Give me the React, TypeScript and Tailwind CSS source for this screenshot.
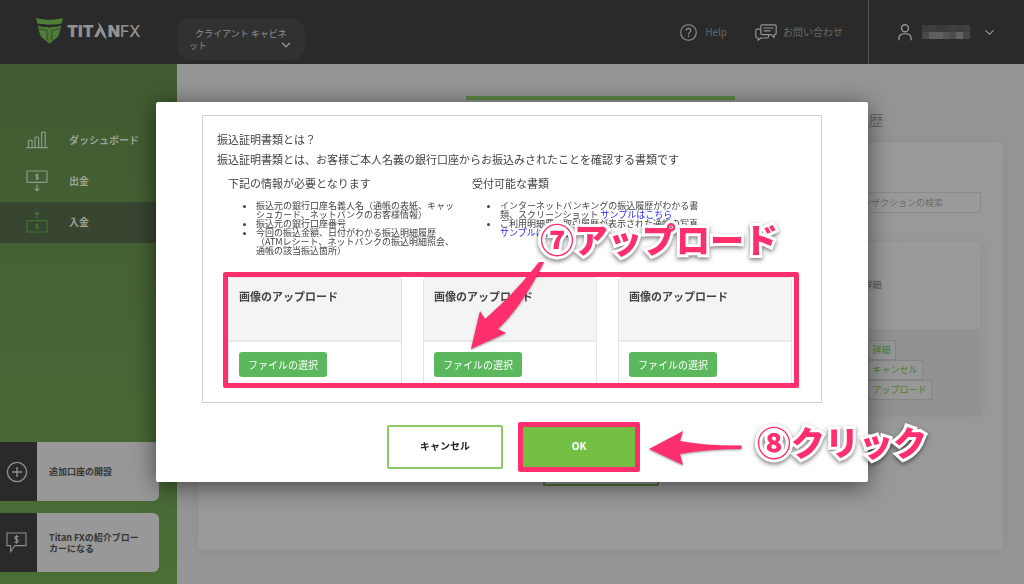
import type { ReactNode } from 'react'
import { ChevronDown } from 'lucide-react'

const UPLOAD_SLOTS = ['slot-1', 'slot-2', 'slot-3']

// Grey levels of the masked account name
const MASK_ROWS = [
  ['#3c3c3c', '#3e3e3e', '#393939', '#3a3a3a', '#3f3f3f', '#3d3d3d', '#414141'],
  ['#484848', '#5e5e5e', '#606060', '#545454', '#4d4d4d', '#636363', '#474747'],
]

function ShieldLogo() {
  return (
    <svg width="27" height="26" viewBox="0 0 27 26" fill="#4e7f35" aria-hidden="true">
      <path d="M0 0C8 2.4 19 2.4 27 0L25.6 5.6C18 7.2 9 7.2 1.4 5.6Z" />
      <path d="M2 7.6C5 8.6 8.6 9.2 12.8 9.3L12.8 25L6 19.4Q4.2 17.800 3.600 15.200Z" />
      <path d="M25 7.6C22 8.6 18.4 9.2 14.2 9.3L14.2 25L21 19.4Q22.800 17.800 23.400 15.200Z" />
      <path d="M3.600 10.800Q7 12 10.800 12.200L11.200 22M23.400 10.800Q20 12 16.200 12.200L15.800 22" fill="none" stroke="#2a2a2a" strokeWidth="0.7" />
      <path d="M12.500 10h2v15l-1 .8-1-.8z" />
    </svg>
  )
}

function ChartIcon() {
  return (
    <svg width="22" height="18" viewBox="0 0 22 18" fill="none" stroke="currentColor" strokeWidth="1.2" aria-hidden="true">
      <path d="M0 16.6h22M2.5 16.5V10.2q0-.8.8-.8h2q.8 0 .8.8v6.3M9 16.5V6.8q0-.8.8-.8h2q.8 0 .8.8v9.7M15.6 16.5V2q0-.8.8-.8h2q.8 0 .8.8v14.5" />
    </svg>
  )
}

function WithdrawIcon() {
  return (
    <svg width="22" height="22" viewBox="0 0 22 22" fill="none" stroke="currentColor" strokeWidth="1.2" aria-hidden="true">
      <rect x="1" y="1" width="20" height="11.4" rx="0.6" />
      <path d="M12.3 5.3Q11 4.2 10 5.1Q9.6 6.3 11 6.7Q12.8 7.2 12 8.5Q10.8 9.4 9.7 8.3M11 3.6v6.4M11 14.4v6.4M8.7 18.4l2.3 2.4 2.3-2.4" />
    </svg>
  )
}

function DepositIcon() {
  return (
    <svg width="22" height="22" viewBox="0 0 22 22" fill="none" stroke="currentColor" strokeWidth="1.2" aria-hidden="true">
      <rect x="1" y="9.6" width="20" height="11.4" rx="0.6" />
      <path d="M12.3 13.9Q11 12.8 10 13.7Q9.6 14.9 11 15.3Q12.8 15.8 12 17.1Q10.8 18 9.7 16.9M11 12.2v6.4M11 7.6V1.2M8.7 3.6L11 1.2l2.3 2.4" />
    </svg>
  )
}

function HelpIcon() {
  return (
    <svg width="17" height="17" viewBox="0 0 17 17" fill="none" stroke="currentColor" strokeWidth="1.1" aria-hidden="true">
      <circle cx="8.5" cy="8.5" r="7.8" />
      <path d="M6.2 6.7Q6.2 4.4 8.5 4.4T10.8 6.5Q10.8 7.6 9.6 8.4T8.5 10.5M8.5 11.6v1.5" />
    </svg>
  )
}

function ChatIcon() {
  return (
    <svg width="22" height="17" viewBox="0 0 22 17" fill="none" stroke="currentColor" strokeWidth="1.2" strokeLinejoin="round" aria-hidden="true">
      <path d="M7.2.8h12.600q1.400 0 1.400 1.400v7q0 1.400-1.400 1.400h-.6v3l-3-3H7.2q-1.400 0-1.400-1.400v-7Q5.800.8 7.2.8zM8.500 4h10M8.500 6.900h7" />
      <path d="M5.600 5.200H2.200Q.8 5.200.8 6.600v6Q.8 14 2.200 14h1v2.400l2.600-2.400h6.400q1.400 0 1.400-1.400v-1.800" />
    </svg>
  )
}

function UserIcon() {
  return (
    <svg width="14" height="17" viewBox="0 0 14 17" fill="none" stroke="currentColor" strokeWidth="1.4" aria-hidden="true">
      <circle cx="7" cy="4.300" r="3.500" />
      <path d="M.8 16.200v-1.200Q.8 9.600 7 9.600t6.200 5.400v1.200" />
    </svg>
  )
}

function PlusCircleIcon() {
  return (
    <svg width="22" height="22" viewBox="0 0 22 22" fill="none" stroke="currentColor" strokeWidth="1.400" aria-hidden="true">
      <circle cx="11" cy="11" r="9.600" />
      <path d="M11 6v10M6 11h10" />
    </svg>
  )
}

function BrokerIcon() {
  return (
    <svg width="21" height="21" viewBox="0 0 21 21" fill="none" stroke="currentColor" strokeWidth="1.100" aria-hidden="true">
      <path d="M1 1h19v12.600H8.800L4.600 19.600V13.600H1z" />
      <path d="M12.600 5Q10.600 3.700 9 4.900Q8.400 6.700 10.500 7.200Q13.100 7.900 12 9.700Q10.400 10.900 8.500 9.500M10.500 2.900v8.800" />
    </svg>
  )
}

function Header() {
  return (
    <header className="flex h-16 items-center bg-[#2a2a2a] text-[#929292]">
      <a href="#" className="flex w-[177px] items-center gap-1 pb-0.5 pl-9" aria-label="TITAN FX">
        <ShieldLogo />
        <span className="flex items-center text-[16px] leading-4 font-black font-['Inter',sans-serif]">
          <span>TIT</span>
          <svg width="14" height="18" viewBox="0 0 14 18" fill="currentColor" aria-hidden="true">
            <path d="M0 15L5 5L7 8.500L3.600 15zM3.600 0Q9 4 13 17.600Q7.500 14 6.500 8Z" />
          </svg>
          <span>N</span>
          <span className="font-medium">FX</span>
        </span>
      </a>
      <button className="mb-1 flex h-[42px] w-32 items-end justify-between self-end rounded-[14px] bg-[#313131] px-3 pb-2 text-left text-[9px] leading-[12px]">
        <span className="w-[106px] indent-[6px]">クライアント キャビネット</span>
        <ChevronDown className="-ml-3 shrink-0" size={14} strokeWidth={2.5} />
      </button>
      <nav className="ml-auto flex items-center gap-7 pr-[25px] text-[10px] leading-4 text-[#686868]">
        <a href="#" className="flex items-center gap-2">
          <span className="text-[#929292]"><HelpIcon /></span>
          Help
        </a>
        <a href="#" className="flex items-center gap-1.5">
          <span className="text-[#929292]"><ChatIcon /></span>
          お問い合わせ
        </a>
      </nav>
      <button className="flex h-full items-center border-l border-[#565656] pr-[27px] pl-[29px]" aria-label="アカウント">
        <UserIcon />
        <span className="ml-2.5 flex w-12 flex-col">
          {MASK_ROWS.map((row, i) => (
            <span key={i} className="flex h-[7px]">
              {row.map((color, j) => (
                <span key={j} className="flex-1" style={{ backgroundColor: color }} />
              ))}
            </span>
          ))}
        </span>
        <ChevronDown className="ml-3" size={15} strokeWidth={2} />
      </button>
    </header>
  )
}

function NavItem({ icon, label, active }: { icon: ReactNode; label: string; active?: boolean }) {
  return (
    <a href="#" className={`flex h-[41px] items-center pb-0.5 pl-[26px] ${active ? 'bg-[#384531]' : ''}`}>
      <span className={`w-[43px] ${active ? 'text-[#41742e]' : 'text-[#8f998a]'}`}>{icon}</span>
      <span className="text-[10px] leading-4 font-bold text-[#9ca298]">{label}</span>
    </a>
  )
}

function PromoCard({ icon, label }: { icon: ReactNode; label: string }) {
  return (
    <a href="#" className="mr-[18px] flex h-[59px] overflow-hidden rounded-r-md bg-[#989898]">
      <span className="flex w-[37px] shrink-0 items-center justify-center bg-[#2a2a2a] pr-1 text-[#8d8d8d]">{icon}</span>
      <span className="flex items-center pr-4 pl-3 text-[9px] leading-[11px] font-bold text-[#353535]">{label}</span>
    </a>
  )
}

function Sidebar() {
  return (
    <aside className="flex w-[177px] shrink-0 flex-col bg-linear-to-b from-[#415b32] to-[#4a6e36] pt-14 pb-3">
      <nav>
        <NavItem icon={<ChartIcon />} label="ダッシュボード" />
        <NavItem icon={<WithdrawIcon />} label="出金" />
        <NavItem icon={<DepositIcon />} label="入金" active />
      </nav>
      <div className="mt-auto flex flex-col gap-3">
        <PromoCard icon={<PlusCircleIcon />} label="追加口座の開設" />
        <PromoCard icon={<BrokerIcon />} label="Titan FXの紹介ブローカーになる" />
      </div>
    </aside>
  )
}

function RowAction({ label }: { label: string }) {
  return (
    <button className="h-5 border border-[#858585] bg-[#979797] px-1 text-[9px] leading-4 text-[#4a8036]">{label}</button>
  )
}

function History() {
  return (
    <main className="flex-1 bg-[#959595] px-[21px] pt-8 pb-8">
      <div className="grid grid-cols-3 text-center text-[15px] leading-5 text-[#686868]">
        <a href="#" className="h-[46px] border-t-4 border-transparent pt-2.5">{' '}</a>
        <a href="#" className="h-[46px] border-t-4 border-[#5c8a46] pt-2.5">{' '}</a>
        <a href="#" className="h-[46px] border-t-4 border-transparent pt-2.5">履歴</a>
      </div>
      <section className="rounded-sm bg-[#999] px-[22px] pt-[50px] pb-16 shadow-[0_0_12px_rgba(0,0,0,0.06)]">
        <div className="flex justify-end">
          <input
            type="text"
            aria-label="トランザクションの検索"
            placeholder="トランザクションの検索"
            className="h-[21px] w-[146px] border border-[#8b8b8b] bg-[#9a9a9a] px-2 text-[9px] placeholder:text-[#6b6b6b]"
          />
        </div>
        <table className="mt-7 w-full border border-[#929292] text-left text-[9px] leading-4 shadow-[0_0_12px_rgba(0,0,0,0.05)]">
          <thead>
            <tr className="h-[87px] bg-[#9a9a9a] text-[#626262]">
              <td />
              <th className="w-[117px] font-medium">詳細</th>
            </tr>
          </thead>
          <tbody>
            <tr className="h-[87px] bg-[#929292]">
              <td />
              <td className="pb-1 pl-1">
                <div className="flex flex-col items-start">
                  <RowAction label="詳細" />
                  <RowAction label="キャンセル" />
                  <RowAction label="アップロード" />
                </div>
              </td>
            </tr>
          </tbody>
        </table>
        <div className="mt-[26px] flex justify-center">
          <button className="h-11 w-[116px] rounded-xs border-2 border-[#50733f]" aria-label="戻る" />
        </div>
      </section>
    </main>
  )
}

function UploadCard() {
  return (
    <div className="h-full rounded-t-sm border border-b-0 border-[#e4e4e4] bg-white">
      <div className="h-16 border-b-2 border-[#e9e9e9] bg-[#f4f4f4] px-2.5 pt-2">
        <h4 className="text-[11px] leading-5 font-bold text-[#444]">画像のアップロード</h4>
      </div>
      <div className="flex px-2.5 pt-2.5">
        <button className="h-[25px] w-[88px] rounded-[3px] bg-[#5cb85c] text-[10px] leading-4 text-white">ファイルの選択</button>
      </div>
    </div>
  )
}

function Annotation({ children }: { children: ReactNode }) {
  return (
    <span className="text-[34px] leading-10 font-black whitespace-nowrap text-[#ff2f6e] [-webkit-text-stroke:6px_white] [paint-order:stroke_fill] [stroke-linejoin:round] drop-shadow-[0_2px_2px_rgba(0,0,0,0.5)]">
      {children}
    </span>
  )
}

function UploadDialog() {
  return (
    <div
      role="dialog"
      aria-modal="true"
      className="relative w-full max-w-[712px] rounded-xs bg-white px-[46px] py-[13px] shadow-[0_4px_24px_rgba(0,0,0,0.55)]"
    >
      <div className="border border-[#cfcfcf] pt-[13px] pb-3.5 text-[#444]">
        <div className="px-3.5 text-[11px] leading-5">
          <h2>振込証明書類とは？</h2>
          <p>振込証明書類とは、お客様ご本人名義の銀行口座からお振込みされたことを確認する書類です</p>
        </div>
        <div className="mt-1 flex pl-[25px]">
          <div className="w-[244px]">
            <h3 className="text-[11px] leading-5">下記の情報が必要となります</h3>
            <ul className="mt-2 list-disc pr-4 pl-7 text-[9px] leading-[9px]">
              <li>振込元の銀行口座名義人名（通帳の表紙、キャッシュカード、ネットバンクのお客様情報）</li>
              <li>振込元の銀行口座番号</li>
              <li>今回の振込金額、日付がわかる振込明細履歴（ATMレシート、ネットバンクの振込明細照会、通帳の該当振込箇所）</li>
            </ul>
          </div>
          <div className="w-[244px]">
            <h3 className="text-[11px] leading-5">受付可能な書類</h3>
            <ul className="mt-2 list-disc pr-4 pl-7 text-[9px] leading-[9px]">
              <li>
                インターネットバンキングの振込履歴がわかる書類、スクリーンショット <a href="#" className="text-[#2a2aff]">サンプルはこちら</a>
              </li>
              <li>
                ご利用明細票、取引履歴が表示された通帳の写真 <a href="#" className="text-[#2a2aff]">サンプルはこちら</a>
              </li>
            </ul>
          </div>
        </div>
        <div className="mt-[17px] mr-[22px] ml-5 grid h-[116px] grid-cols-3 gap-[21px] rounded-xs border-5 border-[#ff2f6e] pr-0.5">
          {UPLOAD_SLOTS.map(slot => (
            <UploadCard key={slot} />
          ))}
        </div>
      </div>

      <div className="mt-[22px] flex justify-center gap-[18px] text-[10px] leading-4 font-bold">
        <button className="h-11 w-[116px] rounded-xs border-2 border-[#8bc965] pb-0.5 text-[#222]">キャンセル</button>
        <div className="relative">
          <button className="h-11 w-[116px] bg-[#72bf44] pb-0.5 text-white">OK</button>
          <span className="pointer-events-none absolute -inset-[3px] rounded-xs border-5 border-[#ff2f6e]" />
        </div>
      </div>

      {/* Guide arrows and step labels */}
      <svg
        className="pointer-events-none absolute top-40 left-[312px] drop-shadow-[0_1px_1px_rgba(0,0,0,0.4)]"
        width="80" height="90" viewBox="0 0 80 90" fill="#ff2f6e" aria-hidden="true"
      >
        <path d="M3 87L12 49L17 57Q47 31 71 0H76Q55 43 30 67L38 71Z" />
      </svg>
      <svg
        className="pointer-events-none absolute top-[328px] left-[492px] drop-shadow-[0_1px_1px_rgba(0,0,0,0.4)]"
        width="96" height="38" viewBox="0 0 96 38" fill="#ff2f6e" aria-hidden="true"
      >
        <path d="M1 19L35 1L32 11Q60 16 93 15.5Q94.5 17.5 93 19Q60 19 32 24L35 35Z" />
      </svg>
      <div className="pointer-events-none absolute top-[117px] left-[384px]"><Annotation>⑦アップロード</Annotation></div>
      <div className="pointer-events-none absolute top-80 left-[601px]"><Annotation>⑧クリック</Annotation></div>
    </div>
  )
}

export default function App() {
  return (
    <div className="flex min-h-screen flex-col font-['Noto_Sans_CJK_JP',sans-serif]">
      <Header />
      <div className="flex flex-1">
        <Sidebar />
        <History />
      </div>
      <div className="fixed inset-0 flex items-center justify-center">
        <UploadDialog />
      </div>
    </div>
  )
}
